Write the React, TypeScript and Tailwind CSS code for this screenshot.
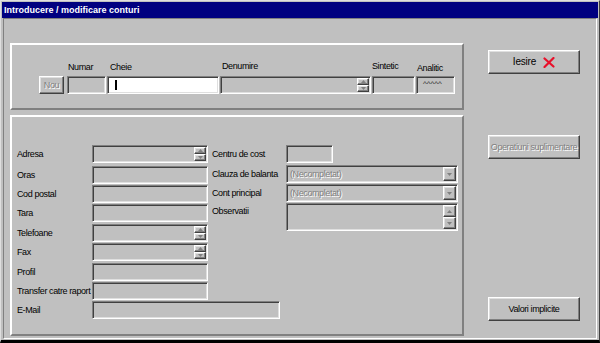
import type { ReactNode } from 'react';

const FONT = "font-['Liberation_Sans',Arial,sans-serif]";
const sunken =
  'border border-t-[#808080] border-l-[#808080] border-b-white border-r-white shadow-[inset_1px_1px_0_#404040,inset_-1px_-1px_0_#dfdfdf]';
const raised =
  'border border-t-white border-l-white border-b-[#404040] border-r-[#404040] shadow-[inset_-1px_-1px_0_#808080,inset_1px_1px_0_#dfdfdf]';
const etched = 'text-[#808080] [text-shadow:1px_1px_0_#fff]';
const panel = 'border-2 border-t-white border-l-white border-b-[#808080] border-r-[#808080]';

function Arrow({ up, dim }: { up?: boolean; dim?: boolean }) {
  return (
    <svg width="5" height="3" viewBox="0 0 5 3" className="block">
      <path d={up ? 'M2.5 0L5 3L0 3Z' : 'M0 0L5 0L2.5 3Z'} fill={dim ? '#808080' : '#000'} />
    </svg>
  );
}

function Spin() {
  return (
    <div className="ml-auto flex flex-col justify-center">
      <div className={`${raised} w-[12px] h-[8px] flex items-center justify-center`}>
        <Arrow up dim />
      </div>
      <div className={`${raised} w-[12px] h-[8px] flex items-center justify-center`}>
        <Arrow dim />
      </div>
    </div>
  );
}

function Field({ className = '', children }: { className?: string; children?: ReactNode }) {
  return <div className={`${sunken} flex items-stretch p-[1px] shrink-0 ${className}`}>{children}</div>;
}

function Combo() {
  return (
    <Field className="w-[172px] h-[18px] bg-[#c0c0c0]">
      <span className={`${etched} self-center pl-[2px] whitespace-nowrap`}>(Necompletat)</span>
      <div className={`${raised} ml-auto w-[13px] flex items-center justify-center`}>
        <Arrow dim />
      </div>
    </Field>
  );
}

function Button({ children, disabled }: { children: ReactNode; disabled?: boolean }) {
  return (
    <div
      className={`${raised} w-[92px] h-[24px] flex items-center justify-center gap-[7px] whitespace-nowrap ${
        disabled ? etched : 'text-black'
      }`}
    >
      {children}
    </div>
  );
}

const leftRows = [
  { label: 'Adresa', spin: true, gap: '' },
  { label: 'Oras', gap: 'mt-[3px]' },
  { label: 'Cod postal', gap: 'mt-[1px]' },
  { label: 'Tara', gap: 'mt-[1px]' },
  { label: 'Telefoane', spin: true, gap: 'mt-[2px]' },
  { label: 'Fax', spin: true, gap: 'mt-[1px]' },
  { label: 'Profil', gap: 'mt-[2px]' },
  { label: 'Transfer catre raport', gap: 'mt-[1px]' },
  { label: 'E-Mail', wide: true, gap: 'mt-[1px]' },
];

export default function App() {
  return (
    <div
      className={`w-[600px] h-[343px] bg-[#c0c0c0] ${FONT} text-[9px] tracking-[-0.4px] leading-[12px] text-black border-t border-l border-t-[#dfdfdf] border-l-[#dfdfdf] border-r border-b-[3px] border-r-[#404040] border-b-black p-[1px] flex flex-col overflow-hidden`}
    >
      <div className="h-[16px] shrink-0 bg-[#000080] text-white font-bold text-[9px] tracking-normal flex items-center pl-[2px]">
        Introducere / modificare conturi
      </div>

      <div className="flex-1 mx-[1px] border border-t-[#808080] border-l-[#808080] border-b-white border-r-white flex pl-[6px] pt-[24px]">
        <div className="flex flex-col w-[454px] gap-[5px]">
          {/* antet cont */}
          <div className={`${panel} h-[67px] flex items-end pl-[27px] pb-[14px]`}>
            <div className={`${raised} w-[25px] h-[18px] flex items-center justify-center ${etched}`}>Nou</div>
            <div className="flex flex-col ml-[3px]">
              <span className="pl-[1px] mb-[3px]">Numar</span>
              <Field className="w-[39px] h-[18px]" />
            </div>
            <div className="flex flex-col ml-[1px]">
              <span className="pl-[3px] mb-[3px]">Cheie</span>
              <Field className="w-[112px] h-[18px] bg-white">
                <div className="ml-[6px] my-[2px] w-[2px] bg-black" />
              </Field>
            </div>
            <div className="flex flex-col ml-[1px]">
              <span className="pl-[2px] mb-[4px]">Denumire</span>
              <Field className="w-[151px] h-[18px]">
                <Spin />
              </Field>
            </div>
            <div className="flex flex-col ml-[1px]">
              <span className="mb-[4px]">Sintetic</span>
              <Field className="w-[43px] h-[18px]" />
            </div>
            <div className="flex flex-col ml-[1px]">
              <span className="pl-[1px] mb-[2px]">Analitic</span>
              <Field className="w-[39px] h-[18px]">
                <span className="pl-[5px] pt-[2px] text-[8px] leading-[8px] tracking-normal text-[#202020]">^^^^^</span>
              </Field>
            </div>
          </div>

          {/* detalii */}
          <div className={`${panel} h-[221px] flex pt-[28px]`}>
            <div className="flex flex-col w-[196px] pl-[5px]">
              {leftRows.map((r) => (
                <div key={r.label} className={`flex items-center h-[18px] ${r.gap}`}>
                  <span className="w-[75px] shrink-0 whitespace-nowrap">{r.label}</span>
                  <Field className={`${r.wide ? 'w-[188px]' : 'w-[116px]'} h-[18px]`}>{r.spin && <Spin />}</Field>
                </div>
              ))}
            </div>
            <div className="flex flex-col ml-[4px]">
              <div className="flex items-center h-[18px]">
                <span className="w-[74px] shrink-0 whitespace-nowrap">Centru de cost</span>
                <Field className="w-[47px] h-[18px]" />
              </div>
              <div className="flex items-center h-[18px] mt-[2px]">
                <span className="w-[74px] shrink-0 whitespace-nowrap">Clauza de balanta</span>
                <Combo />
              </div>
              <div className="flex items-center h-[18px] mt-[1px]">
                <span className="w-[74px] shrink-0 whitespace-nowrap">Cont principal</span>
                <Combo />
              </div>
              <div className="flex items-start mt-[1px]">
                <span className="w-[74px] shrink-0 pt-[2px]">Observatii</span>
                <Field className="w-[172px] h-[28px]">
                  <div className="ml-auto flex flex-col">
                    <div className={`${raised} w-[13px] h-[12px] flex items-center justify-center`}>
                      <Arrow up dim />
                    </div>
                    <div className={`${raised} w-[13px] h-[12px] flex items-center justify-center`}>
                      <Arrow dim />
                    </div>
                  </div>
                </Field>
              </div>
            </div>
          </div>
        </div>

        {/* butoane */}
        <div className="flex flex-col ml-[24px]">
          <div className="mt-[7px]">
            <Button>
              <span className="text-[10px] tracking-[-0.2px]">Iesire</span>
              <svg width="12" height="11" viewBox="0 0 12 11">
                <path d="M1.5 1.5 L10.5 9.5 M10.5 1 L1.5 10" stroke="#e8102a" strokeWidth="2.2" strokeLinecap="round" />
              </svg>
            </Button>
          </div>
          <div className="mt-[61px]">
            <Button disabled>
              <span>Operatiuni suplimentare</span>
            </Button>
          </div>
          <div className="mt-[138px]">
            <Button>Valori implicite</Button>
          </div>
        </div>
      </div>
    </div>
  );
}
